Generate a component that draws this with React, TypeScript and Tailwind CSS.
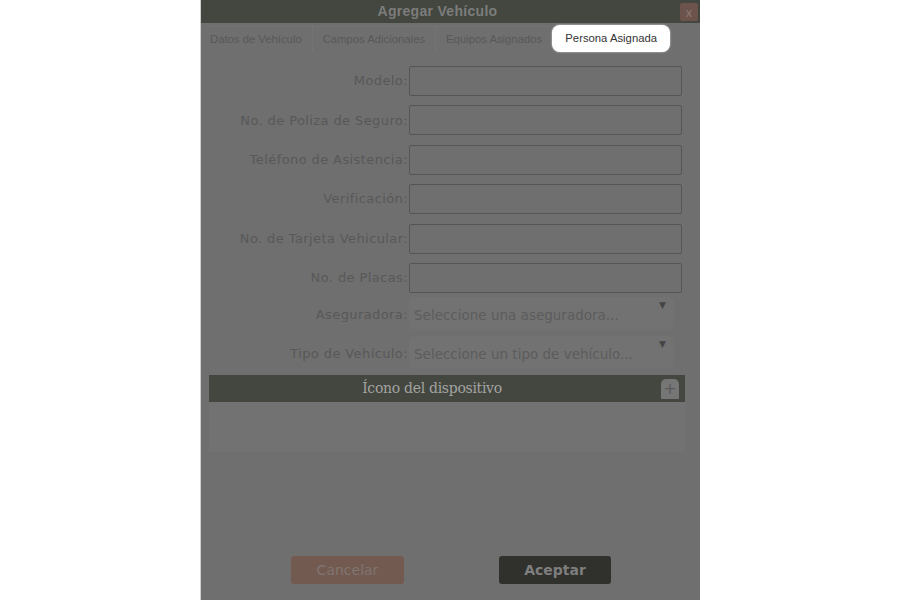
import React from "react";

const fields = [
  "Modelo:",
  "No. de Poliza de Seguro:",
  "Teléfono de Asistencia:",
  "Verificación:",
  "No. de Tarjeta Vehicular:",
  "No. de Placas:",
];

const selects = [
  { label: "Aseguradora:", placeholder: "Seleccione una aseguradora..." },
  { label: "Tipo de Vehículo:", placeholder: "Seleccione un tipo de vehículo..." },
];

const tabs = ["Datos de Vehículo", "Campos Adicionales", "Equipos Asignados"];

export default function App() {
  return (
    <div className="w-[900px] h-[600px] bg-white flex justify-center overflow-hidden">
      <div className="w-[500px] h-full bg-[#6f6f6f] border-l border-[#d0d0d0] flex flex-col">
        {/* Title bar */}
        <div className="relative h-[23px] bg-[#43473f] flex items-center justify-center pr-[26px]">
          <span className="text-[14px] font-bold text-[#7c7c7c] font-['Liberation_Sans',sans-serif] tracking-[0.3px]">
            Agregar Vehículo
          </span>
          <button className="absolute right-[2px] top-[3px] w-[18px] h-[18px] rounded-[2px] bg-[#6c534c] text-[#8a7a74] text-[13px] leading-none flex items-center justify-center font-['Liberation_Sans',sans-serif]">
            x
          </button>
        </div>

        {/* Tabs */}
        <div className="flex items-end pl-[4px] pt-[2px] font-['Liberation_Sans',sans-serif] text-[11.3px]">
          {tabs.map((t, i) => (
            <div
              key={t}
              className={`h-[26px] flex items-center text-[#585858] border-t border-[#747474] ${
                i > 0 ? "border-l px-[10px]" : "pl-[5px] pr-[10px] rounded-tl-[4px]"
              }`}
            >
              {t}
            </div>
          ))}
          <div className="h-[27px] w-[118px] justify-center flex items-center bg-white text-[#333] rounded-[8px] shadow-[0_0_2px_rgba(255,255,255,0.8)]">
            Persona Asignada
          </div>
        </div>

        {/* Form */}
        <div className="flex flex-col pt-[14px] font-['DejaVu_Sans',sans-serif] text-[13px] text-[#585858]">
          <div className="flex flex-col gap-[9.4px]">
            {fields.map((f) => (
              <div key={f} className="flex items-center">
                <label className="w-[208px] text-right pr-[1px] tracking-[0.4px]">{f}</label>
                <div className="w-[273px] h-[30px] border border-[#555] rounded-[2px]" />
              </div>
            ))}
          </div>
          <div className="flex flex-col gap-[6px] mt-[4px]">
            {selects.map((s) => (
              <div key={s.label} className="flex items-end">
                <label className="w-[208px] text-right pr-[1px] pb-[5px] tracking-[0.4px]">{s.label}</label>
                <div className="relative w-[265px] h-[33px] bg-[#727272] rounded-[6px] px-[5px] pt-[8px] text-[13.5px] text-[#5c5c5c]">
                  {s.placeholder}
                  <span className="absolute right-[8px] top-[2px] text-[9px] text-[#444]">▼</span>
                </div>
              </div>
            ))}
          </div>
        </div>

        {/* Icon section */}
        <div className="w-[476px] ml-[8px] mt-[6px]">
          <div className="relative h-[27px] bg-[#43473f] flex items-center justify-center pr-[30px]">
            <span className="text-[14px] text-[#a3a3a3] font-['DejaVu_Serif',serif] tracking-[-0.3px]">
              Ícono del dispositivo
            </span>
            <div className="absolute right-[6px] top-[4px] w-[18px] h-[20px] bg-[#767676] rounded-t-[5px] rounded-b-[1px] flex items-center justify-center text-[#5a5a5a] text-[16px] leading-none font-['DejaVu_Sans',sans-serif]">
              +
            </div>
          </div>
          <div className="h-[50px] bg-[#727272]" />
        </div>

        <div className="flex-1" />

        {/* Footer buttons */}
        <div className="flex justify-between pl-[90px] pr-[89px] pb-[16px] font-['DejaVu_Sans',sans-serif] text-[14px]">
          <button className="w-[113px] h-[28px] rounded-[3px] bg-[#735a50] text-[#7f7470]">Cancelar</button>
          <button className="w-[112px] h-[28px] rounded-[3px] bg-[#30302c] text-[#7e7e7e] font-bold">Aceptar</button>
        </div>
      </div>
    </div>
  );
}
